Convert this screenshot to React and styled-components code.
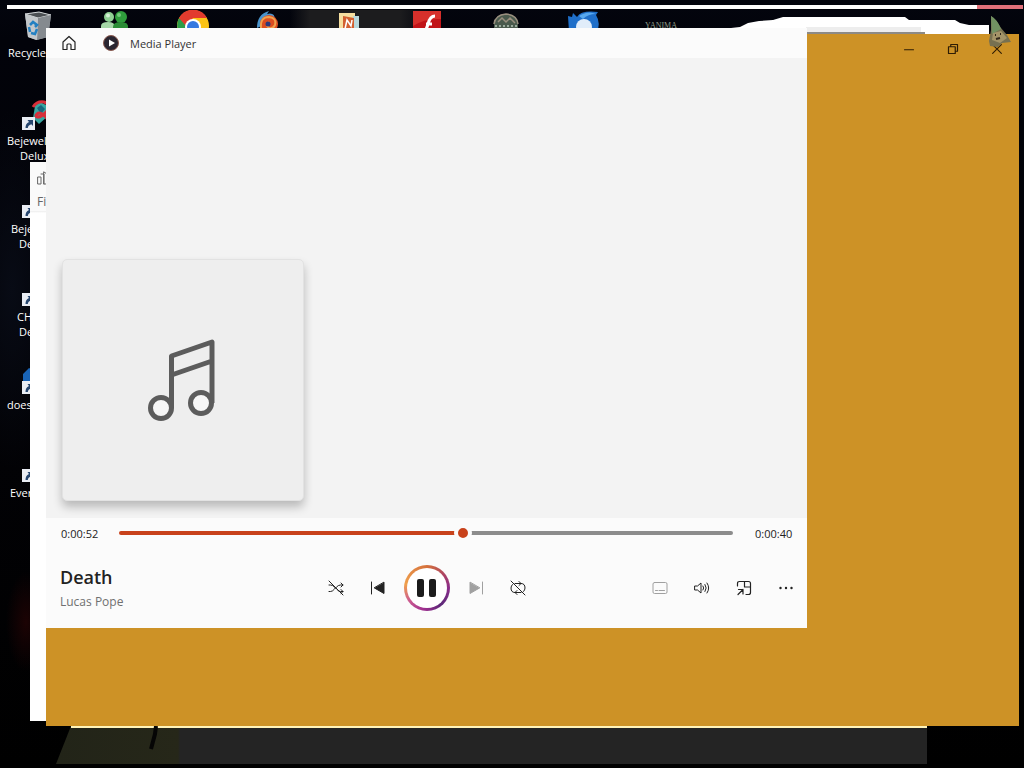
import React, { useState } from "react";
import styled, { createGlobalStyle } from "styled-components";

const GlobalStyle = createGlobalStyle`
  * {
    box-sizing: border-box;
  }
  body {
    margin: 0;
    background: #000;
    font-family: "Open Sans", "Noto Sans", sans-serif;
  }
  button {
    border: 0;
    padding: 0;
    background: none;
    color: inherit;
    font: inherit;
  }
`;

const Desktop = styled.main`
  position: relative;
  height: 100vh;
  overflow: hidden;
  background:
    radial-gradient(ellipse 50px 180px at 12px 290px, #080b15, transparent),
    radial-gradient(ellipse 20px 50px at 26px 622px, #1c0304, transparent),
    linear-gradient(90deg, transparent 290px, #1c1c1e 310px, #1c1c1e 400px, transparent 430px) 0 10px / 100% 18px no-repeat,
    linear-gradient(#03050e, #02030a 40px, #020205 60%, #000);
`;

/* thin bar of a window that is dragged above the screen */
const TopStrip = styled.div`
  position: absolute;
  top: 5px;
  left: 7px;
  right: 1px;
  height: 4px;
  display: flex;
  background: #fff;
`;

const TopStripClose = styled.div`
  margin-left: auto;
  width: 46px;
  background: #e0707a;
`;

const IconGrid = styled.div`
  padding-top: 10px;
  padding-left: 1px;
  display: grid;
  grid-template-columns: repeat(9, 72px);
  grid-auto-rows: 88px;
  column-gap: 6px;
`;

const DesktopIcon = styled.div`
  grid-column: ${(p) => p.$col};
  grid-row: ${(p) => p.$row};
  display: flex;
  flex-direction: column;
  align-items: center;
  color: #fff;
  font-size: 11px;
  line-height: 15px;

  svg {
    flex: none;
    margin-bottom: 3px;
  }
`;

const LabelLine = styled.span`
  width: 100%;
  padding-left: ${(p) => p.$indent}px;
  white-space: nowrap;
`;

const Wordmark = styled.span`
  margin-top: 11px;
  color: #8d9a86;
  font-family: "Liberation Serif", serif;
  font-size: 8px;
  line-height: 10px;
`;

const Taskbar = styled.div`
  position: absolute;
  left: 56px;
  right: 97px;
  bottom: 4px;
  height: 38px;
  background: linear-gradient(90deg, #222418 0, #262719 122px, #242424 124px);
  clip-path: polygon(15px 0, 100% 0, 100% 100%, 0 100%);
`;

const TaskbarEdge = styled.div`
  position: absolute;
  left: 71px;
  right: 97px;
  bottom: 40px;
  height: 2px;
  background: #fff3b8;
`;

const Stroke = styled.svg`
  position: absolute;
  left: 146px;
  bottom: 16px;
`;

const Cloud = styled.svg`
  position: absolute;
  top: 16px;
  right: 33px;
`;

const BackWindow = styled.section`
  position: absolute;
  top: 162px;
  bottom: 47px;
  left: 30px;
  width: 400px;
  padding: 8px 7px;
  display: flex;
  flex-direction: column;
  gap: 8px;
  background: linear-gradient(#fafafa 49px, #ececec 49px, #fff 51px);
  color: #666;
  font-size: 12px;
  line-height: 16px;
`;

const AmberWindow = styled.section`
  position: absolute;
  inset: 34px 5px 42px 46px;
  background: #cd9226;
`;

const WindowButtons = styled.div`
  display: flex;
  justify-content: flex-end;
`;

const WindowButton = styled.button`
  width: 44px;
  height: 30px;
  display: grid;
  place-items: center;
  color: #2e1d05;
`;

const Player = styled.section`
  position: absolute;
  inset: 28px 217px 140px 46px;
  display: flex;
  flex-direction: column;
  background: #fbfbfb;
`;

const TitleBar = styled.header`
  height: 30px;
  flex: none;
  padding-left: 8px;
  display: flex;
  align-items: center;
  color: #333;
  font-size: 11px;
`;

const HomeButton = styled.button`
  width: 30px;
  height: 30px;
  margin-right: 18px;
  display: grid;
  place-items: center;
  color: #222;
`;

const AppName = styled.h1`
  margin: 0 0 0 10px;
  font-size: 11px;
  font-weight: 400;
`;

const Stage = styled.div`
  flex: 1;
  min-height: 0;
  padding: 16px 16px 17px;
  display: flex;
  align-items: flex-end;
  overflow: hidden;
  background: #f3f3f3;
`;

const AlbumArt = styled.div`
  width: 242px;
  height: 242px;
  display: grid;
  place-items: center;
  border: 1px solid #e2e2e2;
  border-radius: 5px;
  background: #eeeeee;
  box-shadow: 0 6px 10px rgba(0, 0, 0, 0.24);
`;

const SeekRow = styled.div`
  height: 30px;
  flex: none;
  padding: 0 16px 0 15px;
  display: flex;
  align-items: center;
  gap: 22px;
  color: #222;
  font-size: 11px;
`;

const Time = styled.span`
  width: 36px;
  white-space: nowrap;
`;

const SeekBar = styled.input`
  flex: 1;
  min-width: 0;
  height: 18px;
  margin: 0;
  appearance: none;
  background: transparent;

  &::-webkit-slider-runnable-track {
    height: 4px;
    border-radius: 2px;
    background: linear-gradient(90deg, #c8421b var(--played), #8c8c8c var(--played));
  }

  &::-webkit-slider-thumb {
    appearance: none;
    width: 18px;
    height: 18px;
    margin-top: -7px;
    border: 4px solid #fbfbfb;
    border-radius: 50%;
    background: #c8421b;
  }
`;

const ControlRow = styled.div`
  height: 80px;
  flex: none;
  display: grid;
  grid-template-columns: minmax(0, 1fr) auto minmax(0, 1fr);
  align-items: center;
`;

const Track = styled.div`
  padding-top: 2px;
  padding-left: 14px;
`;

const TrackTitle = styled.h2`
  margin: 0;
  color: #222;
  font-size: 18px;
  font-weight: 600;
  line-height: 26px;
`;

const Artist = styled.p`
  margin: 0;
  color: #707070;
  font-size: 12px;
  line-height: 24px;
`;

const Buttons = styled.div`
  display: flex;
  align-items: center;
  justify-content: flex-end;
  gap: 10px;
  padding-right: ${(p) => (p.$end ? 5 : 0)}px;
`;

const ControlButton = styled.button`
  width: 32px;
  height: 32px;
  display: grid;
  place-items: center;
  color: ${(p) => (p.disabled ? "#a0a0a0" : "#222")};
`;

const PauseButton = styled.button`
  width: 46px;
  height: 46px;
  display: grid;
  place-items: center;
  border: 3px solid transparent;
  border-radius: 50%;
  background:
    linear-gradient(#fff, #fff) padding-box,
    conic-gradient(#d5713c, #ae4560 50deg, #8b2e8b 90deg, #5c2878 140deg, #a03090 190deg, #cc5c90 235deg, #f0a04c 280deg, #d5713c) border-box;
  color: #1c1c1c;
`;

const Line = ({ size = 16, width = 1, children }) => (
  <svg
    width={size}
    height={size}
    viewBox="0 0 16 16"
    fill="none"
    stroke="currentColor"
    strokeWidth={width}
    strokeLinecap="round"
    strokeLinejoin="round"
    aria-hidden="true"
  >
    {children}
  </svg>
);

const Art = ({ children }) => (
  <svg width="32" height="32" viewBox="0 0 32 32" aria-hidden="true">
    {children}
  </svg>
);

const ShortcutArrow = () => (
  <g>
    <rect x="1" y="19" width="13" height="13" fill="#e9edf4" />
    <path d="M4.500 30c0-3 1-5 3.500-6L6.500 22H12v6l-1.700-1.800C8 27 7 28 6.800 30z" fill="#26466f" />
  </g>
);

const RecycleBin = () => (
  <Art>
    <path d="M4 4l14-2 12 3-3 22-12 3-8-3z" fill="#aeb2b6" />
    <path d="M4 4l14-2 12 3-13 3z" fill="#4c5054" stroke="#d2d6d8" />
    <path d="M17 8l13-3-3 22-11 3z" fill="#858a8f" />
    <path d="M4 4l13 4-1 22-9-3z" fill="#c3c7ca" />
    <path d="M9 15l3-3 4 3-2 2m2 2l-2 5-4-1m-1-1l-1-5" fill="none" stroke="#2380c2" strokeWidth="2.500" />
  </Art>
);

const People = () => (
  <Art>
    <circle cx="10" cy="7" r="5" fill="#8fd094" />
    <circle cx="22" cy="7" r="6" fill="#2f9d3c" />
    <path d="M2 25V16q0-4 7-4t7 5v8z" fill="#a5d6a7" />
    <path d="M14 25V17q0-5 8-5t7 6v7z" fill="#2b8c36" />
    <circle cx="9" cy="5.500" r="2" fill="#d6f1d8" />
    <circle cx="20" cy="5" r="2" fill="#74c97c" />
  </Art>
);

const Chrome = () => (
  <Art>
    <circle cx="16" cy="16" r="16" fill="#fbc316" />
    <path d="M16 16L2 8A16 16 0 0 0 12 31z" fill="#2d9c48" />
    <path d="M2 8a16 16 0 0 1 28 0H16l-7 8z" fill="#e23b2e" />
    <circle cx="16" cy="17" r="8" fill="#fff" />
    <circle cx="16" cy="17" r="6" fill="#3579e0" />
  </Art>
);

const Swirl = () => (
  <Art>
    <path d="M2 18Q2 4 14 1l-2 3q8-2 8 6z" fill="#4a94cc" />
    <circle cx="14" cy="14" r="9" fill="#dc4d20" />
    <path d="M6 18Q5 7 14 7q8 1 6 8-2 4-6 3-4-3 0-6" fill="none" stroke="#f0a14d" strokeWidth="2" />
    <circle cx="13" cy="14" r="2.500" fill="#2d397c" />
  </Art>
);

const Office = () => (
  <Art>
    <path d="M6 3h16v22H6z" fill="#f6dfa0" />
    <path d="M20 6h6v19h-6z" fill="#b8d8dc" />
    <path d="M10 6l11 2v16l-11 2z" fill="#d26031" />
    <path d="M12 19l2-9 4 6 1-6" stroke="#fff" strokeWidth="1.500" fill="none" />
  </Art>
);

const Flash = () => (
  <Art>
    <rect x="2" y="1" width="28" height="28" fill="#c11317" />
    <path d="M2 1h28v8Q14 8 2 16z" fill="#d6302b" />
    <path d="M24 6q-5 0-7 8-1 5-5 9M15 14h6" stroke="#fff" strokeWidth="3" fill="none" />
  </Art>
);

const Emblem = () => (
  <Art>
    <path d="M5 14Q6 4 17 4t12 10v14H5z" fill="#4a5a4d" />
    <path d="M5 14q1-9 12-10 11 1 12 10M9 12l4-4 4 4 4-4 5 5" fill="none" stroke="#998f7f" strokeWidth="1.500" />
    <path d="M6 16h22" stroke="#9aab9d" strokeWidth="2" strokeDasharray="2 2" />
  </Art>
);

const BlueBird = () => (
  <Art>
    <path d="M1 6l4 1 1-4 4 4Q14 0 31 2l-2 3q5 8 1 16L16 30 2 22z" fill="#1f6fc9" />
    <path d="M12 6q9-6 17-2-8 0-13 5z" fill="#58a8ee" />
    <ellipse cx="17" cy="17" rx="8" ry="8" fill="#e1edfa" />
  </Art>
);

const Jewel = ({ tint = "#37a6a1", mark }) => (
  <Art>
    <path d="M14 8l5-4 8 4v10l-9 8-6-6z" fill={tint} />
    <path d="M16 10l4-3 4 4-4 5z" fill="#17677d" />
    {mark && (
      <path d="M12 9q4-6 11-5c7 2 5 9 0 12-6 5-10 3-7 0s9 2 12 7" fill="none" stroke="#d82f3a" strokeWidth="3" />
    )}
    <ShortcutArrow />
  </Art>
);

const BlueFile = () => (
  <Art>
    <path d="M2 12l6-6 8 4 12 2v18H2z" fill="#1964b7" />
    <ShortcutArrow />
  </Art>
);

const Gnome = styled.svg`
  position: absolute;
  top: 15px;
  right: 12px;
`;

const leftIcons = [
  { art: <RecycleBin />, lines: [["Recycle", 7]] },
  { art: <Jewel mark />, lines: [["Bejewel", 6], ["Delux", 19]] },
  { art: <Jewel />, lines: [["Beje", 10], ["De", 18]] },
  { art: <Jewel tint="#b51f38" />, lines: [["CH", 16], ["De", 18]] },
  { art: <BlueFile />, lines: [["does", 6]] },
  { art: <Art><ShortcutArrow /></Art>, lines: [["Ever", 9]] },
];

const topIcons = [People, Chrome, Swirl, Office, Flash, Emblem, BlueBird];

const DURATION = 92;

export default function App() {
  const [elapsed, setElapsed] = useState(51.7);

  return (
    <>
      <GlobalStyle />
      <Desktop>
        <TopStrip>
          <TopStripClose />
        </TopStrip>
        <IconGrid>
          {leftIcons.map((icon, i) => (
            <DesktopIcon key={i} $col={1} $row={i + 1}>
              {icon.art}
              {icon.lines.map(([text, indent]) => (
                <LabelLine key={text} $indent={indent}>
                  {text}
                </LabelLine>
              ))}
            </DesktopIcon>
          ))}
          {topIcons.map((Picture, i) => (
            <DesktopIcon key={i} $col={i + 2} $row={1}>
              <Picture />
            </DesktopIcon>
          ))}
          <DesktopIcon $col={9} $row={1}>
            <Wordmark>YANIMA</Wordmark>
          </DesktopIcon>
        </IconGrid>

        <Cloud width="260" height="20" viewBox="0 0 260 20" aria-hidden="true">
          <path d="M0 12L9 11 17 7 28 5 42 4 52 1H174L178 4H224L229 7 238 9H258V20H0z" fill="#fff" />
          <path d="M75 11H190V18H75z" fill="#ededed" />
          <path d="M75 17H194" stroke="#8d8a85" strokeWidth="2" />
        </Cloud>

        <Taskbar />
        <TaskbarEdge />

        <BackWindow>
          <Line>
            <path d="M1 7h3v7H1zM4 4h3v10M7 2l3 2v10H7z" />
          </Line>
          <span>Fi</span>
        </BackWindow>

        <AmberWindow>
          <WindowButtons>
            <WindowButton aria-label="Minimize">
              <Line size={12}>
                <path d="M2 9h12" strokeWidth="1.500" />
              </Line>
            </WindowButton>
            <WindowButton aria-label="Restore">
              <Line size={12} width={1.6}>
                <path d="M2 5h9v9H2zM5 5V2h9v9h-3" />
              </Line>
            </WindowButton>
            <WindowButton aria-label="Close">
              <Line size={14} width={1.3}>
                <path d="M3 3l10 10M13 3L3 13" />
              </Line>
            </WindowButton>
          </WindowButtons>
        </AmberWindow>

        <Stroke width="14" height="26" viewBox="0 0 14 26" aria-hidden="true">
          <path d="M10 0L9 8 5 23" fill="none" stroke="#050505" strokeWidth="4" />
        </Stroke>

        <Player>
          <TitleBar>
            <HomeButton aria-label="Home">
              <Line>
                <path d="M2 7l6-5.500L14 7v7.500h-4V10q0-1-1-1H7q-1 0-1 1v4.500H2z" strokeWidth="1.200" />
              </Line>
            </HomeButton>
            <svg width="18" height="18" viewBox="0 0 18 18" aria-hidden="true">
              <circle cx="9" cy="9" r="7.500" fill="#2b2631" stroke="#8a5a50" />
              <path d="M7 5.500l6 3.500-6 3.500z" fill="#fff" />
            </svg>
            <AppName>Media Player</AppName>
          </TitleBar>

          <Stage>
            <AlbumArt>
              <svg width="72" height="84" viewBox="0 0 72 84" fill="none" stroke="#5c5c5c" strokeWidth="5" strokeLinejoin="round" aria-hidden="true">
                <circle cx="14" cy="70" r="10.500" fill="#f6f6f6" />
                <circle cx="54" cy="65" r="10.500" fill="#f6f6f6" />
                <path d="M24.500 70V18L65 4V65M24.500 37L65 23" />
              </svg>
            </AlbumArt>
          </Stage>

          <SeekRow>
            <Time>0:00:52</Time>
            <SeekBar
              type="range"
              aria-label="Seek"
              min="0"
              max={DURATION}
              step="any"
              value={elapsed}
              onChange={(e) => setElapsed(Number(e.target.value))}
              style={{ "--played": `${(elapsed / DURATION) * 100}%` }}
            />
            <Time>0:00:40</Time>
          </SeekRow>

          <ControlRow>
            <Track>
              <TrackTitle>Death</TrackTitle>
              <Artist>Lucas Pope</Artist>
            </Track>
            <Buttons>
              <ControlButton aria-label="Shuffle">
                <Line>
                  <path d="M1 11.500h1.500q2 0 4-2.500l2-2q2-2 4-2h2.500M13 3l2 2-2 2M1 5h1.500q2 0 4 2l2 2q2 2.500 4 2.500h2.500M13 9.500l2 2-2 2M1 1l14 14" />
                </Line>
              </ControlButton>
              <ControlButton aria-label="Previous">
                <Line>
                  <path d="M1.500 2v12" />
                  <path d="M14 2.500v11L4.500 8z" fill="currentColor" />
                </Line>
              </ControlButton>
              <PauseButton aria-label="Pause">
                <svg width="20" height="20" viewBox="0 0 20 20" fill="currentColor" aria-hidden="true">
                  <rect x="0" y="1" width="7" height="18" rx="2" />
                  <rect x="12" y="1" width="7" height="18" rx="2" />
                </svg>
              </PauseButton>
              <ControlButton aria-label="Next" disabled>
                <Line>
                  <path d="M14.500 2v12" />
                  <path d="M2 2.500v11L11.500 8z" fill="currentColor" />
                </Line>
              </ControlButton>
              <ControlButton aria-label="Repeat off">
                <Line>
                  <path d="M5 3.500h6q4 0 4 4.500 0 2-1.500 3.500M9 1.500l2 2-2 2M11 12.500H5Q1 12.500 1 8q0-2 1.500-3.500M7 10.500l-2 2 2 2M1 1l14 14" />
                </Line>
              </ControlButton>
            </Buttons>
            <Buttons $end>
              <ControlButton aria-label="Captions" disabled>
                <Line>
                  <rect x="1" y="2.500" width="14" height="11" rx="1.500" />
                  <path d="M3.500 10.500h2M7 10.500h5.500" />
                </Line>
              </ControlButton>
              <ControlButton aria-label="Volume">
                <Line>
                  <path d="M1 6h2.500L7 3v10L3.500 10H1zM9 6q1.500 2 0 4M11 4.500q2.500 3.500 0 7M13 3q3.500 5 0 10" />
                </Line>
              </ControlButton>
              <ControlButton aria-label="Mini player">
                <Line>
                  <path d="M1.500 6V3.500q0-2 2-2h9q2 0 2 2v9q0 2-2 2H10M8.500 1.500V7h6M2 14.500L7 9.500M2.500 9.500H7V14" strokeWidth="1.200" />
                </Line>
              </ControlButton>
              <ControlButton aria-label="More options">
                <Line>
                  <path d="M2.500 8h.01M8 8h.01M13.500 8h.01" strokeWidth="2.400" />
                </Line>
              </ControlButton>
            </Buttons>
          </ControlRow>
        </Player>

        <Gnome width="24" height="34" viewBox="0 0 24 34" aria-hidden="true">
          <path d="M3 1q5 3 10 12l6 7 4 7-9 1-4 4-8-1-1-5 2-11z" fill="#777050" />
          <path d="M3 1q6 3 10 13l-9 5z" fill="#719262" />
          <path d="M5 18l8-2 6 7-7 5-8-3z" fill="#a49468" />
          <path d="M7 20h1M12 19h1M8 24l4-1" stroke="#33291c" strokeWidth="2" />
        </Gnome>
      </Desktop>
    </>
  );
}
